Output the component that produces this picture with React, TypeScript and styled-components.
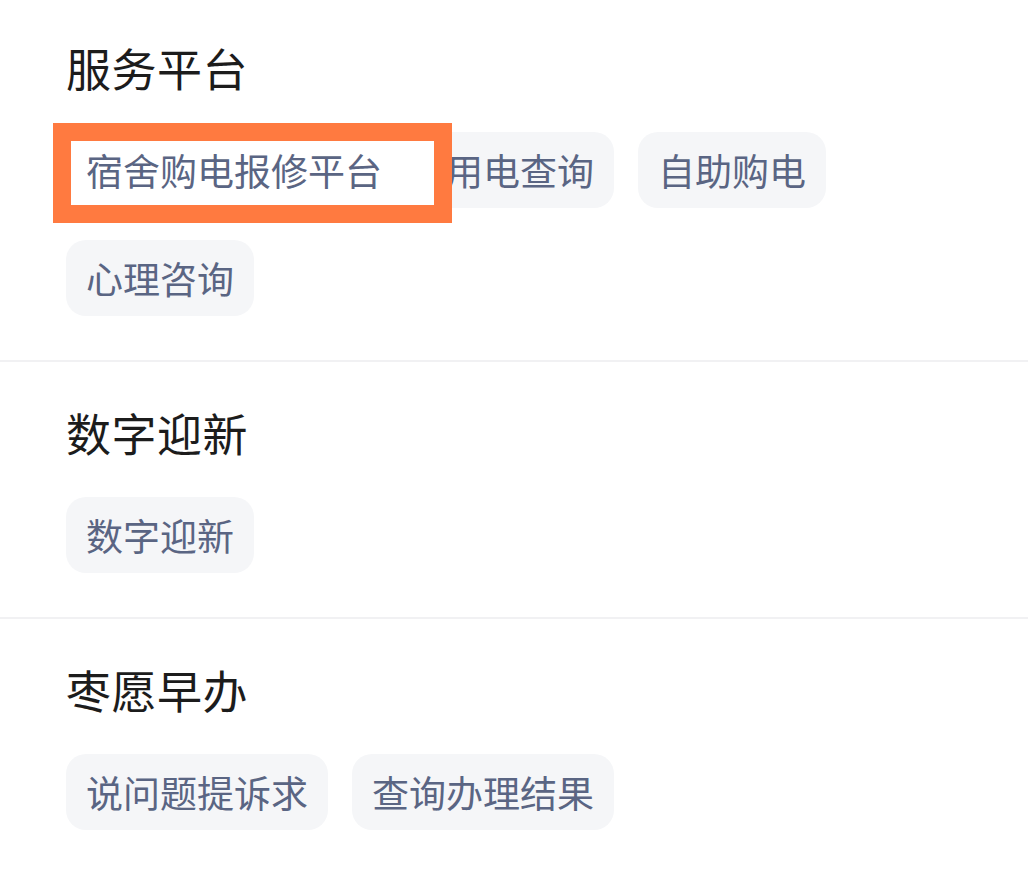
import React from "react";
import styled, { createGlobalStyle } from "styled-components";

const GlobalStyle = createGlobalStyle`
  html, body {
    margin: 0;
    padding: 0;
    background: #ffffff;
    font-family: "Noto Sans CJK SC", "Noto Sans", sans-serif;
  }
`;

const Page = styled.div`
  width: 1028px;
  min-height: 869px;
  background: #ffffff;
  display: flex;
  flex-direction: column;
`;

const Section = styled.section<{ $first?: boolean }>`
  padding: ${(p) => (p.$first ? "45px" : "48px")} 40px 44px 66px;
  border-top: ${(p) => (p.$first ? "none" : "2px solid #f1f1f3")};
  display: flex;
  flex-direction: column;
`;

const Heading = styled.h2`
  margin: 0 0 42px 0;
  font-size: 45px;
  line-height: 45px;
  font-weight: 400;
  color: #1c1c1c;
  letter-spacing: 0.5px;
`;

const ChipList = styled.div`
  display: flex;
  flex-wrap: wrap;
  column-gap: 24px;
  row-gap: 32px;
`;

const ChipWrap = styled.div`
  position: relative;
  display: flex;
`;

const Chip = styled.div<{ $marked?: boolean }>`
  position: relative;
  z-index: ${(p) => (p.$marked ? 2 : "auto")};
  height: 76px;
  padding: 0 20px;
  display: flex;
  align-items: center;
  border-radius: 20px;
  background: ${(p) => (p.$marked ? "transparent" : "#f5f6f8")};
  color: #5a6583;
  font-size: 37px;
  line-height: 37px;
  white-space: nowrap;
`;

const Highlight = styled.div`
  position: absolute;
  z-index: 1;
  left: -13px;
  top: -9px;
  width: 399px;
  height: 100px;
  box-sizing: border-box;
  border: 18px solid #ff7a40;
  background: #ffffff;
  pointer-events: none;
`;

const sections = [
  {
    title: "服务平台",
    items: ["宿舍购电报修平台", "用电查询", "自助购电", "心理咨询"],
    highlight: 0,
  },
  { title: "数字迎新", items: ["数字迎新"], highlight: -1 },
  { title: "枣愿早办", items: ["说问题提诉求", "查询办理结果"], highlight: -1 },
];

export default function App() {
  return (
    <>
      <GlobalStyle />
      <Page>
        {sections.map((s, si) => (
          <Section key={s.title} $first={si === 0}>
            <Heading>{s.title}</Heading>
            <ChipList>
              {s.items.map((item, i) =>
                i === s.highlight ? (
                  <ChipWrap key={item}>
                    <Highlight />
                    <Chip $marked>{item}</Chip>
                  </ChipWrap>
                ) : (
                  <Chip key={item}>{item}</Chip>
                )
              )}
            </ChipList>
          </Section>
        ))}
      </Page>
    </>
  );
}
